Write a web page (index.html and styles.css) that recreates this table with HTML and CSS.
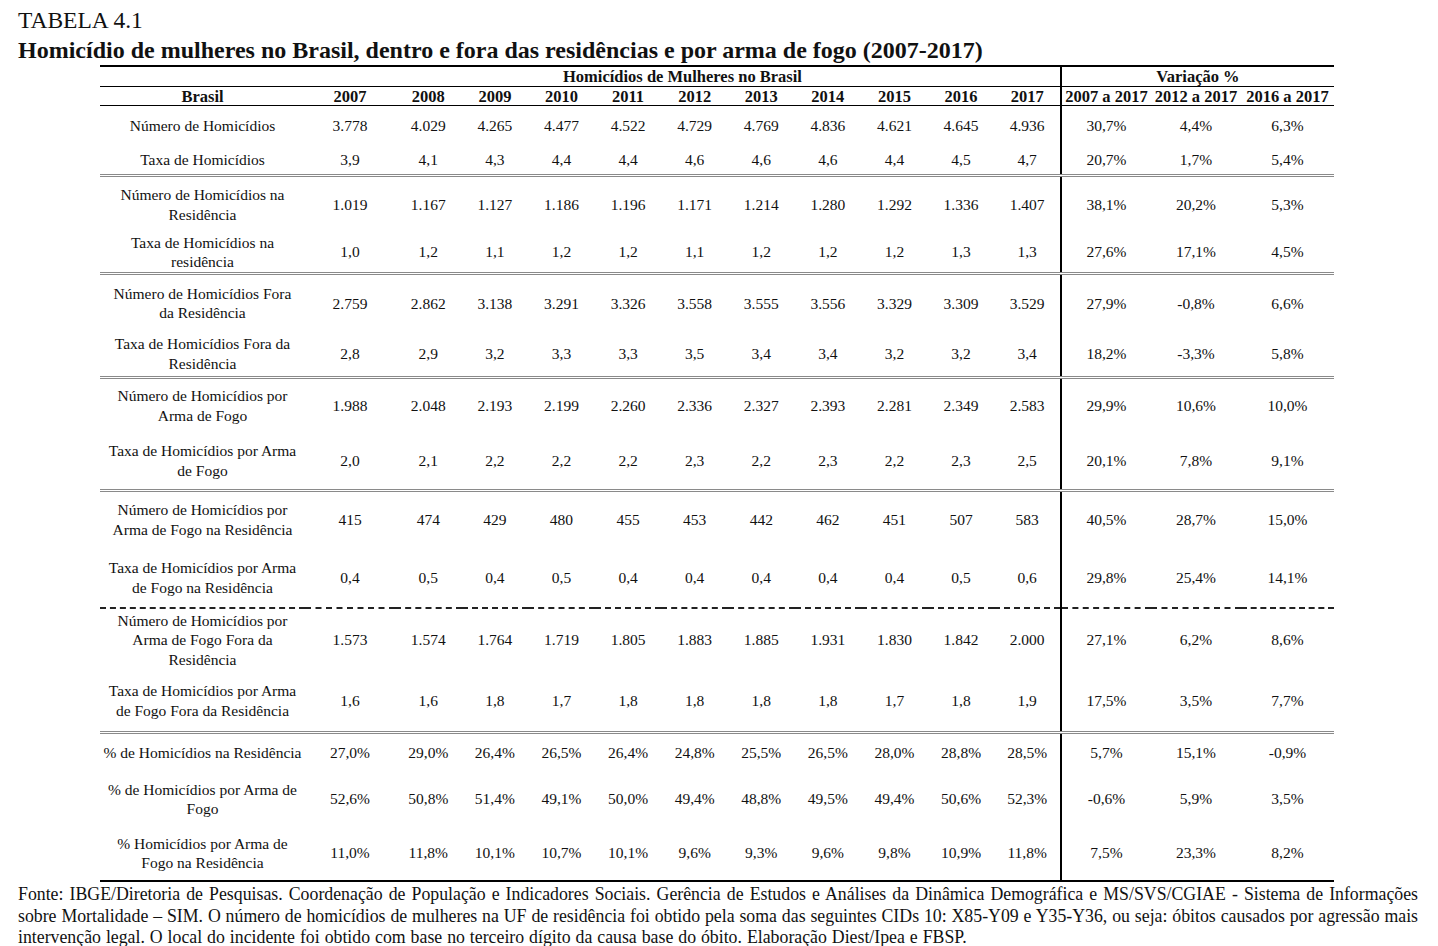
FILE: index.html
```html
<!DOCTYPE html>
<html lang="pt-BR">
<head>
<meta charset="utf-8">
<title>Tabela 4.1</title>
<link rel="stylesheet" href="styles.css">
</head>
<body>
<div class="page">
  <div class="label">TABELA 4.1</div>
  <h1 class="title">Homicídio de mulheres no Brasil, dentro e fora das residências e por arma de fogo (2007-2017)</h1>
  <div class="table-wrap">
    <table class="data">
      <colgroup>
        <col class="c-lab"><col class="c-first">
        <col class="c-year"><col class="c-year"><col class="c-year"><col class="c-year"><col class="c-year">
        <col class="c-year"><col class="c-year"><col class="c-year"><col class="c-year"><col class="c-year">
        <col class="c-var"><col class="c-var"><col class="c-var-last">
      </colgroup>
      <thead>
        <tr class="hr1">
          <th></th>
          <th colspan="11" class="sep">Homicídios de Mulheres no Brasil</th>
          <th colspan="3">Variação %</th>
        </tr>
        <tr class="hr2">
          <th>Brasil</th>
          <th>2007</th><th>2008</th><th>2009</th><th>2010</th><th>2011</th><th>2012</th>
          <th>2013</th><th>2014</th><th>2015</th><th>2016</th><th class="sep">2017</th>
          <th>2007 a 2017</th><th>2012 a 2017</th><th>2016 a 2017</th>
        </tr>
      </thead>
      <tbody>
        <tr class="h39">
          <td class="lab">Número de Homicídios</td>
          <td>3.778</td><td>4.029</td><td>4.265</td><td>4.477</td><td>4.522</td><td>4.729</td><td>4.769</td><td>4.836</td><td>4.621</td><td>4.645</td><td class="sep">4.936</td>
          <td>30,7%</td><td>4,4%</td><td>6,3%</td>
        </tr>
        <tr class="h31 dot">
          <td class="lab">Taxa de Homicídios</td>
          <td>3,9</td><td>4,1</td><td>4,3</td><td>4,4</td><td>4,4</td><td>4,6</td><td>4,6</td><td>4,6</td><td>4,4</td><td>4,5</td><td class="sep">4,7</td>
          <td>20,7%</td><td>1,7%</td><td>5,4%</td>
        </tr>
        <tr class="h57">
          <td class="lab">Número de Homicídios na<br>Residência</td>
          <td>1.019</td><td>1.167</td><td>1.127</td><td>1.186</td><td>1.196</td><td>1.171</td><td>1.214</td><td>1.280</td><td>1.292</td><td>1.336</td><td class="sep">1.407</td>
          <td>38,1%</td><td>20,2%</td><td>5,3%</td>
        </tr>
        <tr class="h36 dot">
          <td class="lab">Taxa de Homicídios na<br>residência</td>
          <td>1,0</td><td>1,2</td><td>1,1</td><td>1,2</td><td>1,2</td><td>1,1</td><td>1,2</td><td>1,2</td><td>1,2</td><td>1,3</td><td class="sep">1,3</td>
          <td>27,6%</td><td>17,1%</td><td>4,5%</td>
        </tr>
        <tr class="h59">
          <td class="lab">Número de Homicídios Fora<br>da Residência</td>
          <td>2.759</td><td>2.862</td><td>3.138</td><td>3.291</td><td>3.326</td><td>3.558</td><td>3.555</td><td>3.556</td><td>3.329</td><td>3.309</td><td class="sep">3.529</td>
          <td>27,9%</td><td>-0,8%</td><td>6,6%</td>
        </tr>
        <tr class="h45 dot">
          <td class="lab">Taxa de Homicídios Fora da<br>Residência</td>
          <td>2,8</td><td>2,9</td><td>3,2</td><td>3,3</td><td>3,3</td><td>3,5</td><td>3,4</td><td>3,4</td><td>3,2</td><td>3,2</td><td class="sep">3,4</td>
          <td>18,2%</td><td>-3,3%</td><td>5,8%</td>
        </tr>
        <tr class="h56">
          <td class="lab">Número de Homicídios por<br>Arma de Fogo</td>
          <td>1.988</td><td>2.048</td><td>2.193</td><td>2.199</td><td>2.260</td><td>2.336</td><td>2.327</td><td>2.393</td><td>2.281</td><td>2.349</td><td class="sep">2.583</td>
          <td>29,9%</td><td>10,6%</td><td>10,0%</td>
        </tr>
        <tr class="h57 dot">
          <td class="lab">Taxa de Homicídios por Arma<br>de Fogo</td>
          <td>2,0</td><td>2,1</td><td>2,2</td><td>2,2</td><td>2,2</td><td>2,3</td><td>2,2</td><td>2,3</td><td>2,2</td><td>2,3</td><td class="sep">2,5</td>
          <td>20,1%</td><td>7,8%</td><td>9,1%</td>
        </tr>
        <tr class="h58">
          <td class="lab">Número de Homicídios por<br>Arma de Fogo na Residência</td>
          <td>415</td><td>474</td><td>429</td><td>480</td><td>455</td><td>453</td><td>442</td><td>462</td><td>451</td><td>507</td><td class="sep">583</td>
          <td>40,5%</td><td>28,7%</td><td>15,0%</td>
        </tr>
        <tr class="h60 dash">
          <td class="lab">Taxa de Homicídios por Arma<br>de Fogo na Residência</td>
          <td>0,4</td><td>0,5</td><td>0,4</td><td>0,5</td><td>0,4</td><td>0,4</td><td>0,4</td><td>0,4</td><td>0,4</td><td>0,5</td><td class="sep">0,6</td>
          <td>29,8%</td><td>25,4%</td><td>14,1%</td>
        </tr>
        <tr class="h63">
          <td class="lab">Número de Homicídios por<br>Arma de Fogo Fora da<br>Residência</td>
          <td>1.573</td><td>1.574</td><td>1.764</td><td>1.719</td><td>1.805</td><td>1.883</td><td>1.885</td><td>1.931</td><td>1.830</td><td>1.842</td><td class="sep">2.000</td>
          <td>27,1%</td><td>6,2%</td><td>8,6%</td>
        </tr>
        <tr class="h61 dot">
          <td class="lab">Taxa de Homicídios por Arma<br>de Fogo Fora da Residência</td>
          <td>1,6</td><td>1,6</td><td>1,8</td><td>1,7</td><td>1,8</td><td>1,8</td><td>1,8</td><td>1,8</td><td>1,7</td><td>1,8</td><td class="sep">1,9</td>
          <td>17,5%</td><td>3,5%</td><td>7,7%</td>
        </tr>
        <tr class="h40">
          <td class="lab">% de Homicídios na Residência</td>
          <td>27,0%</td><td>29,0%</td><td>26,4%</td><td>26,5%</td><td>26,4%</td><td>24,8%</td><td>25,5%</td><td>26,5%</td><td>28,0%</td><td>28,8%</td><td class="sep">28,5%</td>
          <td>5,7%</td><td>15,1%</td><td>-0,9%</td>
        </tr>
        <tr class="h54">
          <td class="lab">% de Homicídios por Arma de<br>Fogo</td>
          <td>52,6%</td><td>50,8%</td><td>51,4%</td><td>49,1%</td><td>50,0%</td><td>49,4%</td><td>48,8%</td><td>49,5%</td><td>49,4%</td><td>50,6%</td><td class="sep">52,3%</td>
          <td>-0,6%</td><td>5,9%</td><td>3,5%</td>
        </tr>
        <tr class="h55">
          <td class="lab">% Homicídios por Arma de<br>Fogo na Residência</td>
          <td>11,0%</td><td>11,8%</td><td>10,1%</td><td>10,7%</td><td>10,1%</td><td>9,6%</td><td>9,3%</td><td>9,6%</td><td>9,8%</td><td>10,9%</td><td class="sep">11,8%</td>
          <td>7,5%</td><td>23,3%</td><td>8,2%</td>
        </tr>
      </tbody>
    </table>
  </div>
  <div class="source">
    <div class="line just">Fonte: IBGE/Diretoria de Pesquisas. Coordenação de População e Indicadores Sociais. Gerência de Estudos e Análises da Dinâmica Demográfica e MS/SVS/CGIAE - Sistema de Informações</div>
    <div class="line just">sobre Mortalidade – SIM. O número de homicídios de mulheres na UF de residência foi obtido pela soma das seguintes CIDs 10: X85-Y09 e Y35-Y36, ou seja: óbitos causados por agressão mais</div>
    <div class="line last">intervenção legal. O local do incidente foi obtido com base no terceiro dígito da causa base do óbito. Elaboração Diest/Ipea e FBSP.</div>
  </div>
</div>
</body>
</html>
```

FILE: styles.css
```css
html, body {
  margin: 0;
  padding: 0;
  background: #ffffff;
}

body {
  font-family: "Liberation Serif", "Times New Roman", serif;
  color: #111111;
}

.page {
  width: 1400px;
  padding: 7px 20px 0 18px;
}

.label {
  font-size: 23.5px;
  line-height: 26px;
  font-weight: normal;
}

.title {
  margin: 3px 0 0;
  font-size: 24px;
  line-height: 28px;
  font-weight: bold;
}

.table-wrap {
  margin: 1px 0 0 82px;
}

.data {
  border-collapse: collapse;
  table-layout: fixed;
  width: 1234px;
  border-top: 2px solid #000;
  border-bottom: 2px solid #000;
}

.c-lab { width: 205px; }
.c-first { width: 90px; }
.c-year { width: 66.6px; }
.c-var { width: 90px; }
.c-var-last { width: 93px; }

.data th {
  font-size: 16.5px;
  font-weight: bold;
  line-height: 17px;
  padding: 0;
  text-align: center;
  white-space: nowrap;
}

.hr1 th {
  height: 19px;
  border-bottom: 1.5px solid #000;
}

.hr2 th {
  height: 18px;
  border-bottom: 1.5px solid #000;
}

.data td {
  font-size: 15.5px;
  line-height: 19.5px;
  padding: 0 1px;
  text-align: center;
  vertical-align: middle;
  white-space: nowrap;
}

.data .sep {
  border-right: 2px solid #000;
}

.data tr.dot td {
  border-bottom: 3px double #8a8a8a;
}

.data tr.dash td {
  border-bottom: 2px dashed #222;
}

.h31 { height: 31px; }
.h36 { height: 36px; }
.h39 { height: 39px; }
.h40 { height: 40px; }
.h45 { height: 45px; }
.h54 { height: 54px; }
.h55 { height: 55px; }
.h56 { height: 56px; }
.h57 { height: 57px; }
.h58 { height: 58px; }
.h59 { height: 59px; }
.h60 { height: 60px; }
.h61 { height: 61px; }
.h63 { height: 63px; }

.source {
  margin-top: 2px;
  font-size: 17.8px;
  line-height: 21.5px;
}

.line {
  white-space: nowrap;
}

.line.just {
  white-space: normal;
  text-align: justify;
  text-align-last: justify;
}

.line.last {
  word-spacing: 0.5px;
}
```
